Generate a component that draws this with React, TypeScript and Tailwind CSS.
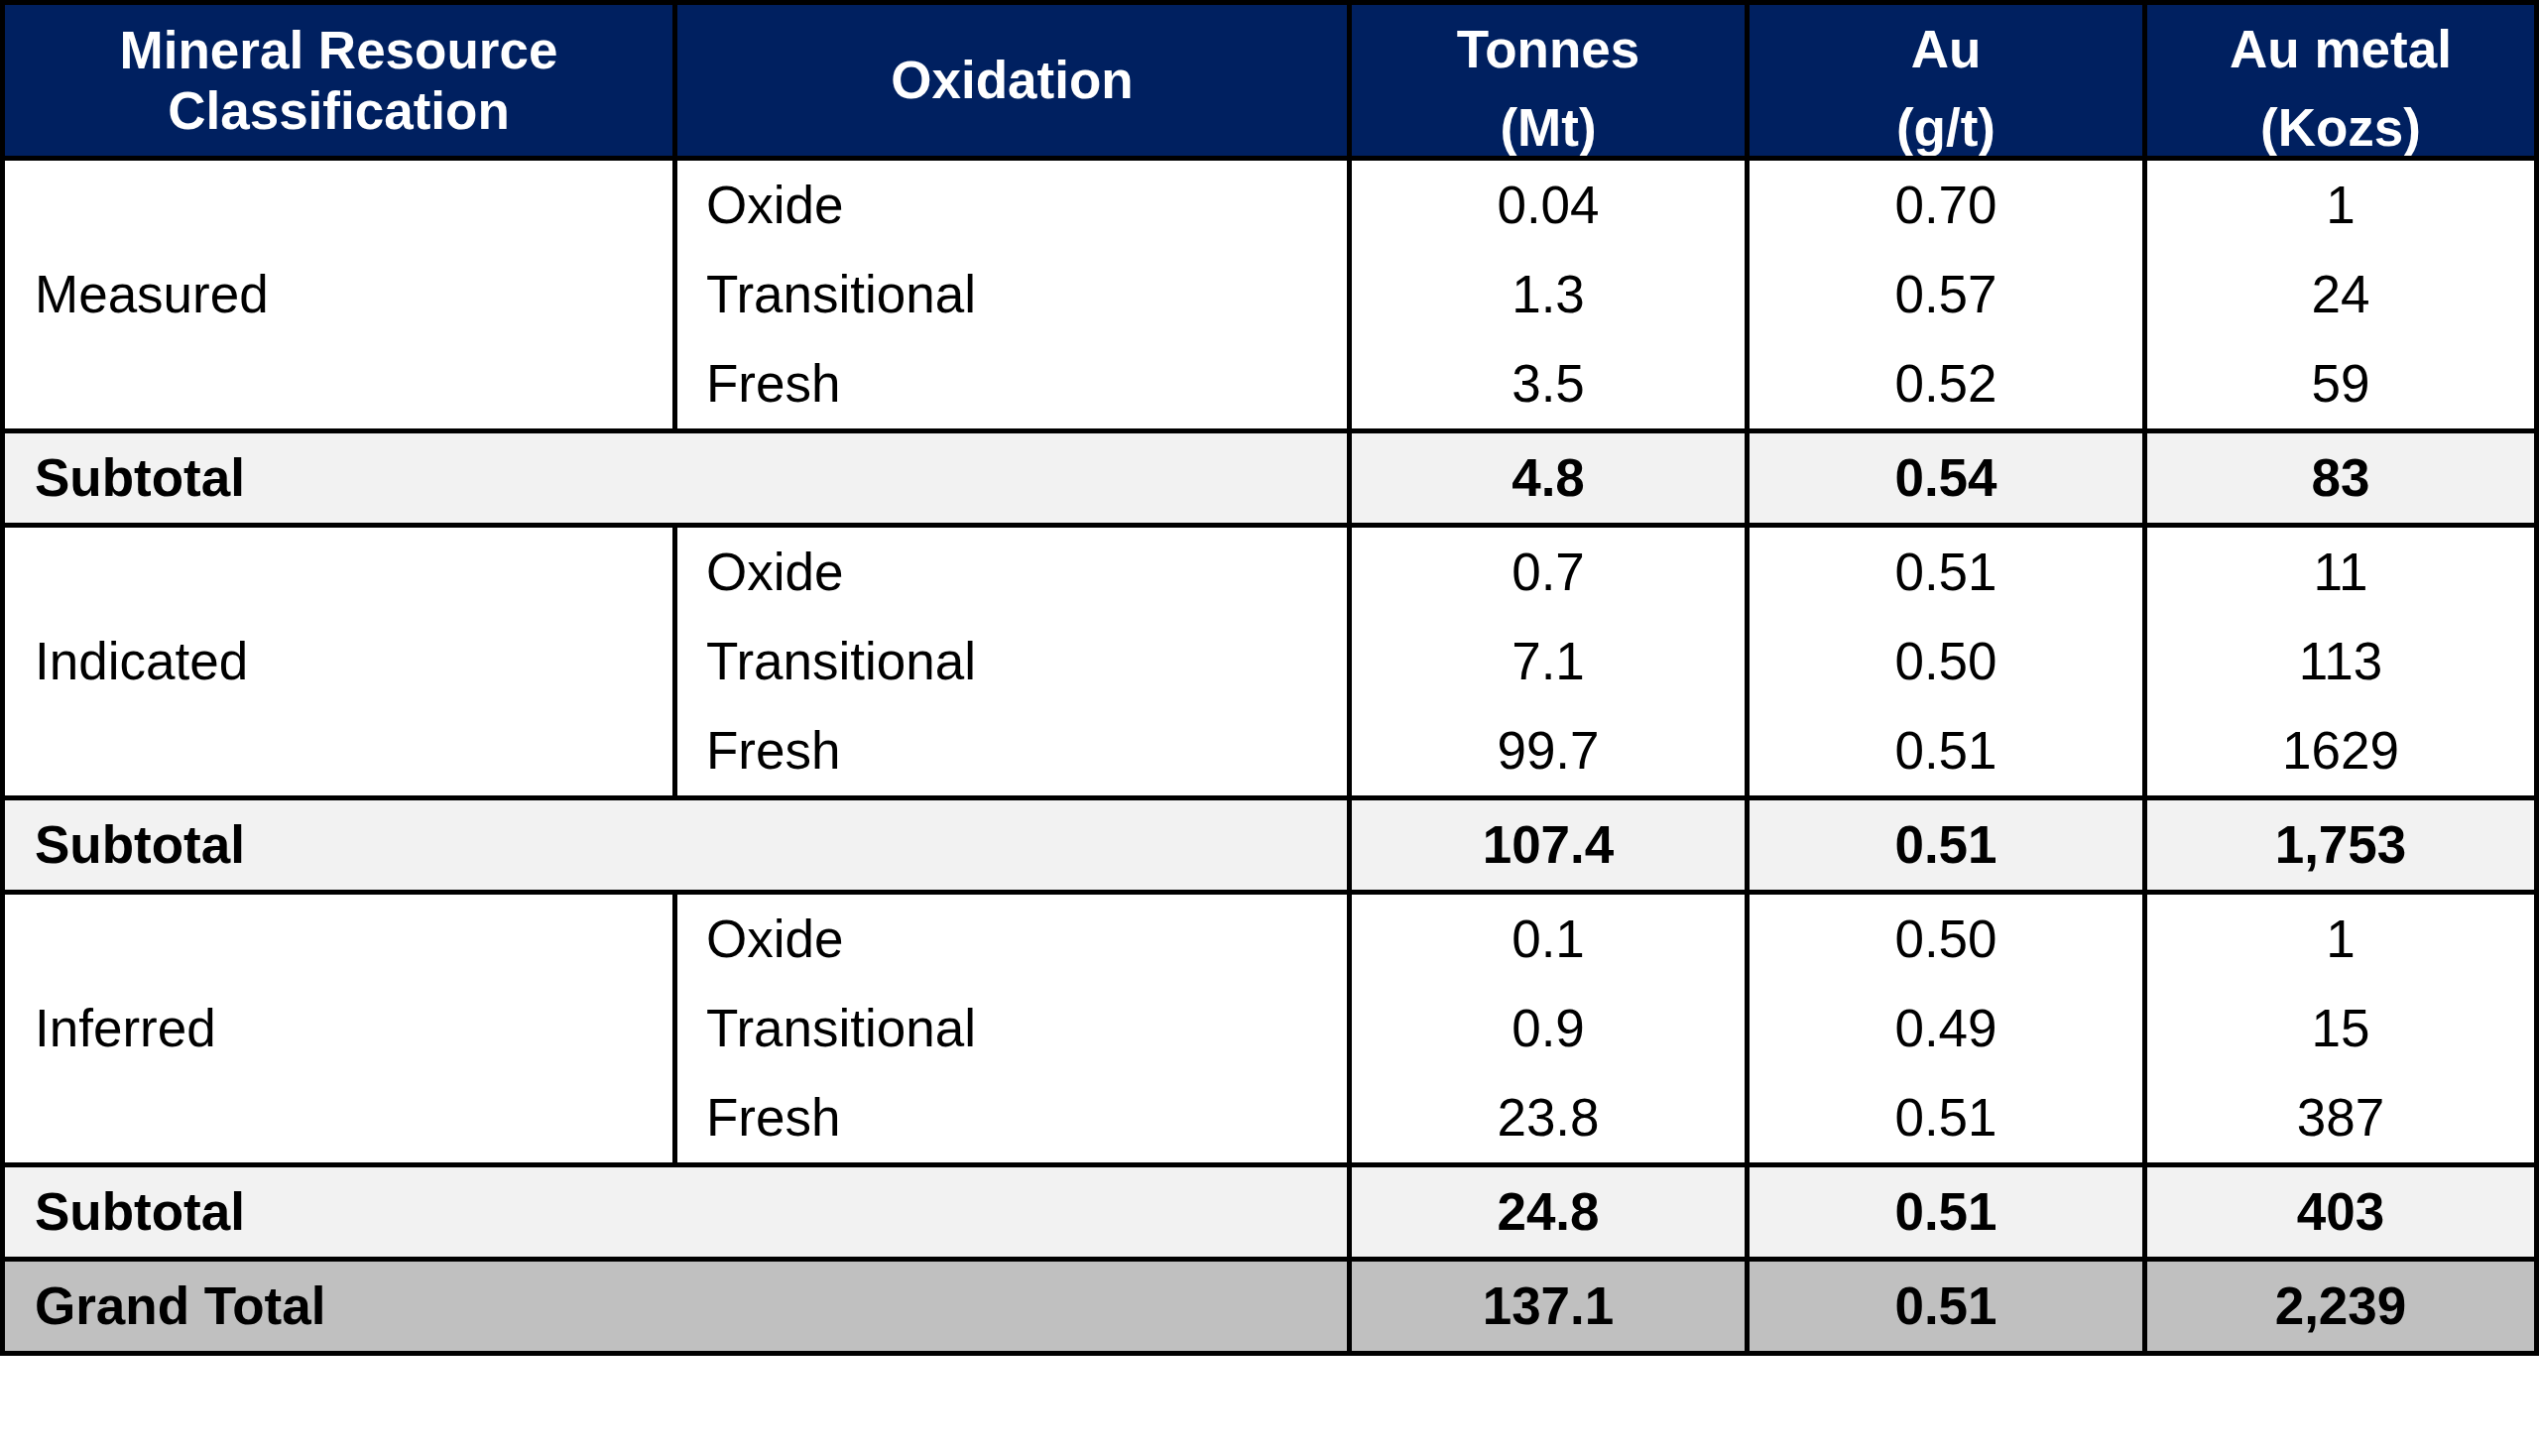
import React from "react";

type Line = { ox: string; t: string; au: string; metal: string };
type Group = { name: string; lines: Line[]; sub: [string, string, string] };

const groups: Group[] = [
  {
    name: "Measured",
    lines: [
      { ox: "Oxide", t: "0.04", au: "0.70", metal: "1" },
      { ox: "Transitional", t: "1.3", au: "0.57", metal: "24" },
      { ox: "Fresh", t: "3.5", au: "0.52", metal: "59" },
    ],
    sub: ["4.8", "0.54", "83"],
  },
  {
    name: "Indicated",
    lines: [
      { ox: "Oxide", t: "0.7", au: "0.51", metal: "11" },
      { ox: "Transitional", t: "7.1", au: "0.50", metal: "113" },
      { ox: "Fresh", t: "99.7", au: "0.51", metal: "1629" },
    ],
    sub: ["107.4", "0.51", "1,753"],
  },
  {
    name: "Inferred",
    lines: [
      { ox: "Oxide", t: "0.1", au: "0.50", metal: "1" },
      { ox: "Transitional", t: "0.9", au: "0.49", metal: "15" },
      { ox: "Fresh", t: "23.8", au: "0.51", metal: "387" },
    ],
    sub: ["24.8", "0.51", "403"],
  },
];

const Stack = ({ items, align }: { items: string[]; align: "left" | "center" }) => (
  <div className="flex flex-col bg-white">
    {items.map((v, i) => (
      <div
        key={i}
        className={
          align === "left"
            ? "h-[90px] flex items-center pl-[29px]"
            : "h-[90px] flex items-center justify-center"
        }
      >
        {v}
      </div>
    ))}
  </div>
);

// header cells with units on a second line; the unit line is clipped by the rule below
const TwoLineHead = ({ top, bottom }: { top: string; bottom: string }) => (
  <div className="h-[152px] bg-[#002060] text-white font-bold overflow-hidden flex flex-col items-center pt-[5px] leading-[79px]">
    <span className="shrink-0">{top}</span>
    <span className="shrink-0">{bottom}</span>
  </div>
);

export default function App() {
  return (
    <div className="w-[2560px] h-[1468px] bg-white font-['Liberation_Sans',Arial,sans-serif] text-[53px] text-black">
      <div className="grid grid-cols-[673px_675px_396px_396px_390px] grid-rows-[152px_auto] gap-[5px] p-[5px] bg-black w-[2560px]">
        {/* Header */}
        <div className="h-[152px] bg-[#002060] text-white font-bold flex items-center justify-center text-center leading-[61px]">
          Mineral Resource
          <br />
          Classification
        </div>
        <div className="h-[152px] bg-[#002060] text-white font-bold flex items-center justify-center">
          Oxidation
        </div>
        <TwoLineHead top="Tonnes" bottom="(Mt)" />
        <TwoLineHead top="Au" bottom="(g/t)" />
        <TwoLineHead top="Au metal" bottom="(Kozs)" />

        {groups.map((g) => (
          <React.Fragment key={g.name}>
            <div className="h-[270px] bg-white flex items-center pl-[30px]">{g.name}</div>
            <Stack items={g.lines.map((l) => l.ox)} align="left" />
            <Stack items={g.lines.map((l) => l.t)} align="center" />
            <Stack items={g.lines.map((l) => l.au)} align="center" />
            <Stack items={g.lines.map((l) => l.metal)} align="center" />

            <div className="col-span-2 h-[90px] bg-[#f2f2f2] font-bold flex items-center pl-[30px]">
              Subtotal
            </div>
            {g.sub.map((v, i) => (
              <div key={i} className="h-[90px] bg-[#f2f2f2] font-bold flex items-center justify-center">
                {v}
              </div>
            ))}
          </React.Fragment>
        ))}

        {/* Grand total */}
        <div className="col-span-2 h-[90px] bg-[#c0c0c0] font-bold flex items-center pl-[30px]">
          Grand Total
        </div>
        <div className="h-[90px] bg-[#c0c0c0] font-bold flex items-center justify-center">137.1</div>
        <div className="h-[90px] bg-[#c0c0c0] font-bold flex items-center justify-center">0.51</div>
        <div className="h-[90px] bg-[#c0c0c0] font-bold flex items-center justify-center">2,239</div>
      </div>
    </div>
  );
}
